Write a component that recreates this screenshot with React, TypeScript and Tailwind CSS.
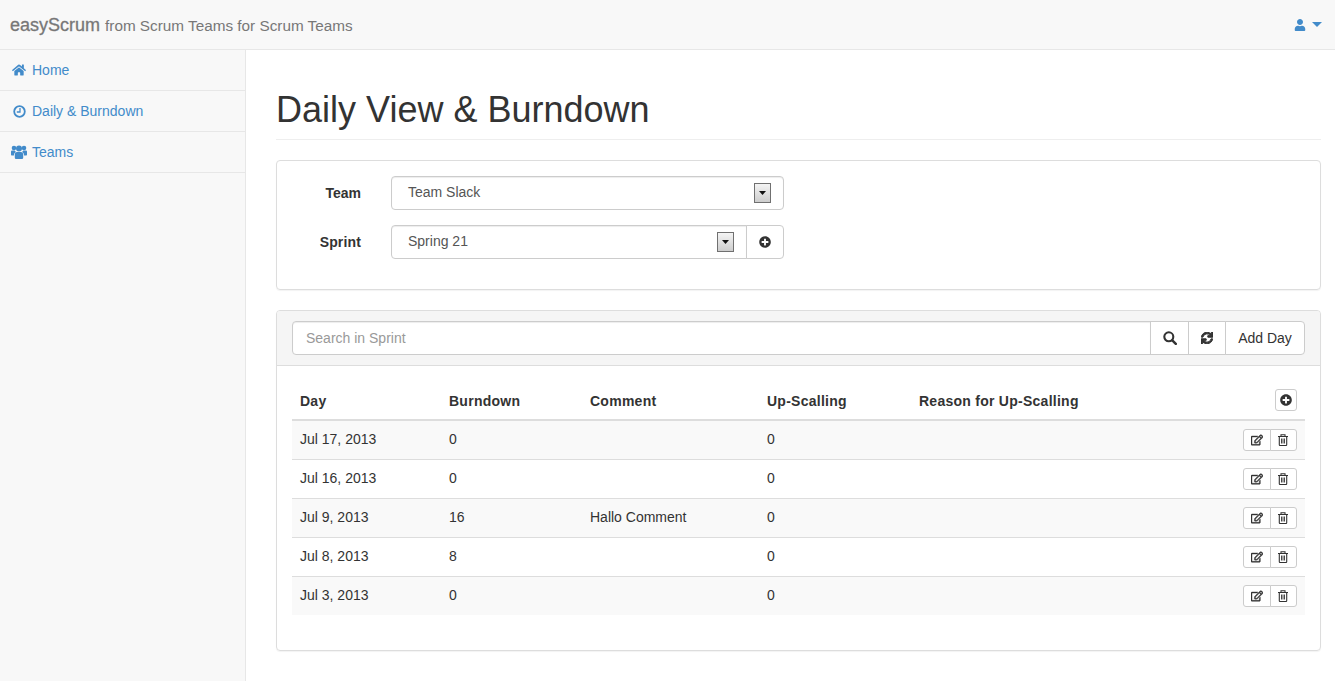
import { FaHome, FaUser, FaPlusCircle, FaSync, FaRegEdit } from 'react-icons/fa'

function ClockIcon() {
  return (
    <svg width="13" height="13" viewBox="0 0 13 13" fill="none" stroke="currentColor">
      <circle cx="6.500" cy="6.500" r="5.300" strokeWidth="1.800" />
      <path d="M7 3v4H3.800" strokeWidth="1.300" />
    </svg>
  )
}

function UsersIcon() {
  return (
    <svg width="16" height="14" viewBox="0 0 16 14" fill="currentColor">
      <circle cx="3" cy="3" r="2.300" />
      <circle cx="13" cy="3" r="2.300" />
      <circle cx="8" cy="3.600" r="3" />
      <path d="M0 6.600c0-.8.600-1.200 1.200-1.200h2.600c.3.800.8 1.300 1.300 1.700-1.200.4-2 1.400-2.200 3.400H1C.4 10.500 0 10.100 0 9.400z" />
      <path d="M16 6.600c0-.8-.6-1.200-1.200-1.200h-2.600c-.3.800-.8 1.300-1.300 1.700 1.200.4 2 1.400 2.200 3.400H15c.6 0 1-.4 1-1.100z" />
      <path d="M3.800 9.500C3.800 8 4.800 7 6 7h4c1.200 0 2.200 1 2.200 2.500v3c0 1-.7 1.500-1.500 1.500H5.300c-.8 0-1.500-.5-1.500-1.500z" />
    </svg>
  )
}

function SearchIcon() {
  return (
    <svg width="14" height="14" viewBox="0 0 14 14" fill="none" stroke="currentColor">
      <circle cx="5.800" cy="5.800" r="4.500" strokeWidth="2.100" />
      <path d="M9.300 9.300l3.500 3.500" strokeWidth="2.500" strokeLinecap="round" />
    </svg>
  )
}

function TrashIcon() {
  return (
    <svg width="10" height="12" viewBox="0 0 10 12" fill="none" stroke="currentColor">
      <path d="M0 2.500h10M3 2.500V.8h4v1.700" strokeWidth="1.100" />
      <path d="M1.300 2.500v8.200c0 .5.300.8.700.8h6c.4 0 .7-.3.700-.8V2.500" strokeWidth="1.100" />
      <path d="M3.500 4.500v5M5 4.500v5M6.500 4.500v5" strokeWidth="0.900" />
    </svg>
  )
}

const NAV_ITEMS = [
  { label: 'Home', icon: <FaHome size={14} /> },
  { label: 'Daily & Burndown', icon: <ClockIcon /> },
  { label: 'Teams', icon: <UsersIcon /> },
]

const ROWS = [
  { day: 'Jul 17, 2013', burndown: '0', comment: '', up: '0' },
  { day: 'Jul 16, 2013', burndown: '0', comment: '', up: '0' },
  { day: 'Jul 9, 2013', burndown: '16', comment: 'Hallo Comment', up: '0' },
  { day: 'Jul 8, 2013', burndown: '8', comment: '', up: '0' },
  { day: 'Jul 3, 2013', burndown: '0', comment: '', up: '0' },
]

function SelectArrow() {
  return (
    <span className="w-[17px] h-[20px] border border-[#707070] bg-gradient-to-b from-[#f4f4f4] to-[#cdcdcd] flex items-center justify-center">
      <svg width="7" height="4" viewBox="0 0 7 4">
        <path d="M0 0h7L3.500 4z" fill="#111" />
      </svg>
    </span>
  )
}

export default function App() {
  return (
    <div className="h-screen flex flex-col bg-white text-[14px] leading-[20px] text-[#333] font-['Liberation_Sans',Arial,sans-serif] overflow-hidden">
      <div className="h-[50px] shrink-0 bg-[#f8f8f8] border-b border-[#e7e7e7] flex items-center justify-between pl-[10px] pr-[13px]">
        <div className="text-[#777] flex items-baseline pt-[1px]">
          <span className="text-[18px] [-webkit-text-stroke:0.3px_#777]">easyScrum</span>
          <span className="text-[15.3px] ml-[5px]">from Scrum Teams for Scrum Teams</span>
        </div>
        <div className="flex items-center gap-[6px] text-[#428bca]">
          <FaUser size={12} />
          <svg width="10" height="5" viewBox="0 0 10 5" fill="currentColor">
            <path d="M0 0h10L5 5z" />
          </svg>
        </div>
      </div>

      <div className="flex flex-1 min-h-0">
        <div className="w-[246px] shrink-0 bg-[#f8f8f8] border-r border-[#e7e7e7]">
          {NAV_ITEMS.map(item => (
            <div key={item.label} className="h-[41px] border-b border-[#e7e7e7] flex items-center text-[#428bca]">
              <span className="w-[32px] flex justify-center pl-[6px]">{item.icon}</span>
              <span>{item.label}</span>
            </div>
          ))}
        </div>

        <div className="flex-1 pl-[30px] pr-[14px]">
          <h1 className="text-[36px] leading-[40px] font-normal mt-[40px] pb-[9px] border-b border-[#eee] mb-[20px]">
            Daily View &amp; Burndown
          </h1>

          <div className="h-[130px] border border-[#ddd] rounded-[4px] shadow-[0_1px_1px_rgba(0,0,0,0.05)] pt-[15px] mb-[20px]">
            <div className="flex items-center h-[34px] mb-[15px]">
              <label className="w-[84px] text-right font-bold">Team</label>
              <div className="ml-[30px] w-[393px] h-[34px] border border-[#ccc] rounded-[4px] flex items-center justify-between pl-[16px] pr-[12px] text-[#555] shadow-[inset_0_1px_1px_rgba(0,0,0,0.075)]">
                <span className="pb-[2px]">Team Slack</span>
                <SelectArrow />
              </div>
            </div>
            <div className="flex items-center h-[34px]">
              <label className="w-[84px] text-right font-bold tracking-[0.15px]">Sprint</label>
              <div className="ml-[30px] w-[393px] h-[34px] flex">
                <div className="flex-1 border border-[#ccc] rounded-l-[4px] flex items-center justify-between pl-[16px] pr-[12px] text-[#555] shadow-[inset_0_1px_1px_rgba(0,0,0,0.075)]">
                  <span className="pb-[2px]">Spring 21</span>
                  <SelectArrow />
                </div>
                <div className="w-[38px] -ml-px border border-[#ccc] rounded-r-[4px] flex items-center justify-center">
                  <FaPlusCircle size={12} />
                </div>
              </div>
            </div>
          </div>

          <div className="h-[341px] border border-[#ddd] rounded-[4px] shadow-[0_1px_1px_rgba(0,0,0,0.05)]">
            <div className="h-[55px] bg-[#f5f5f5] border-b border-[#ddd] rounded-t-[3px] px-[15px] pt-[10px]">
              <div className="flex h-[34px]">
                <div className="flex-1 bg-white border border-[#ccc] rounded-l-[4px] px-[13px] flex items-center text-[#999] shadow-[inset_0_1px_1px_rgba(0,0,0,0.075)]">
                  Search in Sprint
                </div>
                <div className="w-[39px] -ml-px bg-white border border-[#ccc] flex items-center justify-center">
                  <SearchIcon />
                </div>
                <div className="w-[38px] -ml-px bg-white border border-[#ccc] flex items-center justify-center">
                  <FaSync size={12} className="stroke-current stroke-[40px]" />
                </div>
                <div className="w-[80px] -ml-px bg-white border border-[#ccc] rounded-r-[4px] flex items-center justify-center">
                  Add Day
                </div>
              </div>
            </div>

            <div className="px-[15px] pt-[15px]">
              <table className="w-full border-collapse table-fixed">
                <thead>
                  <tr className="h-[39px] border-b-2 border-[#ddd] text-left tracking-[0.26px]">
                    <th className="w-[149px] pl-[8px] font-bold align-bottom pb-[8px]">Day</th>
                    <th className="w-[141px] pl-[8px] font-bold align-bottom pb-[8px]">Burndown</th>
                    <th className="w-[177px] pl-[8px] font-bold align-bottom pb-[8px]">Comment</th>
                    <th className="w-[152px] pl-[8px] font-bold align-bottom pb-[8px]">Up-Scalling</th>
                    <th className="pl-[8px] font-bold align-bottom pb-[8px]">Reason for Up-Scalling</th>
                    <th className="w-[120px] pr-[8px] align-bottom pb-[8px]">
                      <div className="flex justify-end">
                        <span className="w-[22px] h-[22px] border border-[#ccc] rounded-[3px] flex items-center justify-center">
                          <FaPlusCircle size={12} />
                        </span>
                      </div>
                    </th>
                  </tr>
                </thead>
                <tbody>
                  {ROWS.map((row, i) => (
                    <tr key={row.day} className={`h-[39px] ${i > 0 ? 'border-t border-[#ddd]' : ''} ${i % 2 === 0 ? 'bg-[#f9f9f9]' : ''}`}>
                      <td className="pl-[8px] pb-[2px]">{row.day}</td>
                      <td className="pl-[8px] pb-[2px]">{row.burndown}</td>
                      <td className="pl-[8px] pb-[2px]">{row.comment}</td>
                      <td className="pl-[8px] pb-[2px]">{row.up}</td>
                      <td />
                      <td className="pr-[8px]">
                        <div className="flex justify-end">
                          <span className="w-[28px] h-[22px] bg-white border border-[#ccc] rounded-l-[3px] flex items-center justify-center">
                            <FaRegEdit size={12} className="stroke-current stroke-[20px]" />
                          </span>
                          <span className="w-[27px] h-[22px] -ml-px bg-white border border-[#ccc] rounded-r-[3px] flex items-center justify-center pr-[2px]">
                            <TrashIcon />
                          </span>
                        </div>
                      </td>
                    </tr>
                  ))}
                </tbody>
              </table>
            </div>
          </div>
        </div>
      </div>
    </div>
  )
}
